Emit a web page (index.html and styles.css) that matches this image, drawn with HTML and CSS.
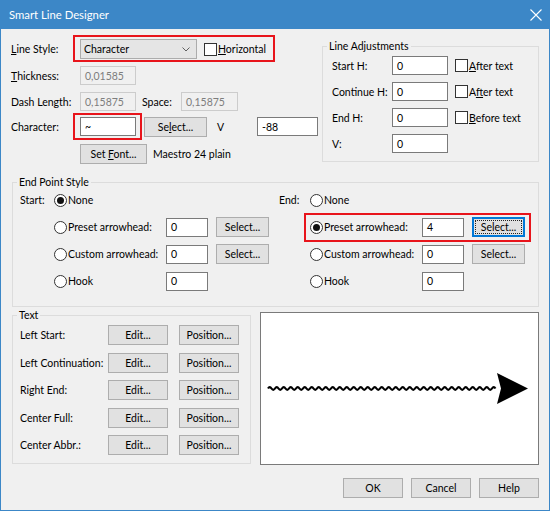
FILE: index.html
```html
<!DOCTYPE html>
<html>
<head>
<meta charset="utf-8">
<title>Smart Line Designer</title>
<link rel="stylesheet" href="styles.css">
</head>
<body>
<div class="window">
  <div class="titlebar">
    <span class="title">Smart Line Designer</span>
    <svg class="close" width="12" height="12" viewBox="0 0 12 12"><path d="M0.5 0.5L11.5 11.5M11.5 0.5L0.5 11.5" stroke="#fff" stroke-width="1.1" fill="none"/></svg>
  </div>
  <div class="content">
    <div class="top">
      <div class="left">
        <div class="row r1">
          <span class="lbl w62"><u>L</u>ine Style:</span>
          <div class="hl hl-style">
            <div class="combo"><span>Character</span><svg width="8" height="5" viewBox="0 0 8 5"><path d="M0.5 0.5L4 4L7.5 0.5" stroke="#606060" stroke-width="1" fill="none"/></svg></div>
            <span class="check"></span><span class="cklbl"><u>H</u>orizontal</span>
          </div>
        </div>
        <div class="row r2">
          <span class="lbl w69"><u>T</u>hickness:</span>
          <span class="field dis w56">0,01585</span>
        </div>
        <div class="row r3">
          <span class="lbl w69">Dash Length:</span>
          <span class="field dis w56">0,15875</span>
          <span class="lbl space">Space:</span>
          <span class="field dis w57">0,15875</span>
        </div>
        <div class="row r4">
          <span class="lbl w62">Character:</span>
          <div class="hl hl-char"><span class="field w56">~</span></div>
          <button class="btn sel">Se<u>l</u>ect...</button>
          <span class="lbl v">V</span>
          <span class="field w61">-88</span>
        </div>
        <div class="row r5">
          <button class="btn font">Set <u>F</u>ont...</button>
          <span class="lbl fontname">Maestro 24 plain</span>
        </div>
      </div>
      <fieldset class="group adj">
        <legend>Line Adjustments</legend>
        <div class="arow"><span class="lbl w60">Start H:</span><span class="field w56">0</span><span class="check"></span><span class="cklbl"><u>A</u>fter text</span></div>
        <div class="arow"><span class="lbl w60">Continue H:</span><span class="field w56">0</span><span class="check"></span><span class="cklbl">A<u>f</u>ter text</span></div>
        <div class="arow"><span class="lbl w60">End H:</span><span class="field w56">0</span><span class="check"></span><span class="cklbl"><u>B</u>efore text</span></div>
        <div class="arow"><span class="lbl w60">V:</span><span class="field w56">0</span></div>
      </fieldset>
    </div>

    <fieldset class="group eps">
      <legend>End Point Style</legend>
      <div class="eps-body">
        <div class="side side-start">
          <span class="lbl">Start:</span>
          <span class="opt"><span class="radio on"></span><span class="rlbl">None</span></span>
          <span></span><span></span>
          <span></span>
          <span class="opt"><span class="radio"></span><span class="rlbl">Preset arrowhead:</span></span>
          <span class="field w42">0</span>
          <button class="btn w53">Select...</button>
          <span></span>
          <span class="opt"><span class="radio"></span><span class="rlbl">Custom arrowhead:</span></span>
          <span class="field w42">0</span>
          <button class="btn w53">Select...</button>
          <span></span>
          <span class="opt"><span class="radio"></span><span class="rlbl">Hook</span></span>
          <span class="field w42">0</span>
          <span></span>
        </div>
        <div class="side side-end">
          <span class="lbl">End:</span>
          <span class="opt"><span class="radio"></span><span class="rlbl">None</span></span>
          <span></span><span></span>
          <span></span>
          <div class="hl hl-preset">
            <span class="opt"><span class="radio on"></span><span class="rlbl">Preset arrowhead:</span></span>
            <span class="field w42">4</span>
            <button class="btn w53 focus"><span class="dots">Select...</span></button>
          </div>
          <span></span>
          <span class="opt"><span class="radio"></span><span class="rlbl">Custom arrowhead:</span></span>
          <span class="field w42">0</span>
          <button class="btn w53">Select...</button>
          <span></span>
          <span class="opt"><span class="radio"></span><span class="rlbl">Hook</span></span>
          <span class="field w42">0</span>
          <span></span>
        </div>
      </div>
    </fieldset>

    <div class="bottom">
      <fieldset class="group text">
        <legend>Text</legend>
        <div class="tgrid">
          <span class="lbl">Left Start:</span><button class="btn">Edit...</button><button class="btn">Position...</button>
          <span class="lbl">Left Continuation:</span><button class="btn">Edit...</button><button class="btn">Position...</button>
          <span class="lbl">Right End:</span><button class="btn">Edit...</button><button class="btn">Position...</button>
          <span class="lbl">Center Full:</span><button class="btn">Edit...</button><button class="btn">Position...</button>
          <span class="lbl">Center Abbr.:</span><button class="btn">Edit...</button><button class="btn">Position...</button>
        </div>
      </fieldset>
      <div class="preview">
        <svg width="277" height="151" viewBox="0 0 277 151">
          <path d="M7 75.5 q1.75 -2.6 3.5 0 t3.5 0 t3.5 0 t3.5 0 t3.5 0 t3.5 0 t3.5 0 t3.5 0 t3.5 0 t3.5 0 t3.5 0 t3.5 0 t3.5 0 t3.5 0 t3.5 0 t3.5 0 t3.5 0 t3.5 0 t3.5 0 t3.5 0 t3.5 0 t3.5 0 t3.5 0 t3.5 0 t3.5 0 t3.5 0 t3.5 0 t3.5 0 t3.5 0 t3.5 0 t3.5 0 t3.5 0 t3.5 0 t3.5 0 t3.5 0 t3.5 0 t3.5 0 t3.5 0 t3.5 0 t3.5 0 t3.5 0 t3.5 0 t3.5 0 t3.5 0 t3.5 0 t3.5 0 t3.5 0 t3.5 0 t3.5 0 t3.5 0 t3.5 0 t3.5 0 t3.5 0 t3.5 0 t3.5 0 t3.5 0 t3.5 0 t3.5 0 t3.5 0 t3.5 0 t3.5 0 t3.5 0 t3.5 0 t3.5 0 t3.5 0" stroke="#000" stroke-width="2.2" fill="none"/>
          <polygon points="236,60 267,75.5 236,91 240,75.5" fill="#000"/>
        </svg>
      </div>
    </div>

    <div class="buttons">
      <button class="btn w60">OK</button>
      <button class="btn w60">Cancel</button>
      <button class="btn w60">Help</button>
    </div>
  </div>
</div>
</body>
</html>
```

FILE: styles.css
```css
* { box-sizing: border-box; }
html, body { margin: 0; padding: 0; }
body {
  font-family: Lato, "Segoe UI", "Noto Sans", sans-serif;
  font-size: 10.5px;
  color: #000;
  background: #f0f0f0;
}
.window {
  width: 550px;
  height: 511px;
  background: #f0f0f0;
  border: 1px solid #3c87c7;
  border-top: 0;
  display: flex;
  flex-direction: column;
  overflow: hidden;
}
.titlebar {
  height: 29px;
  flex-shrink: 0;
  background: #3c87c7;
  color: #fff;
  display: flex;
  align-items: center;
  justify-content: space-between;
  padding: 0 7px 0 8px;
  font-size: 11.3px;
}
.content { padding: 6px 10px 0 10px; }

.top { display: flex; height: 129px; }
.left { width: 311px; display: flex; flex-direction: column; }
.row { display: flex; align-items: center; }
.r1 { height: 27px; }
.r2 { height: 19px; margin-top: 4px; }
.r3 { height: 19px; margin-top: 7px; }
.r4 { height: 27px; margin-top: 2px; }
.r5 { height: 20px; margin-top: 4px; padding-left: 69px; }

.lbl { white-space: nowrap; }
.w60 { width: 60px; }
.w62 { width: 62px; }
.w69 { width: 69px; }
.space { width: 39px; margin-left: 6px; }
.v { width: 40px; margin-left: 10px; }
.fontname { margin-left: 6px; }

.hl { border: 2px solid #e8141b; display: flex; align-items: center; }
.hl-style { width: 202px; height: 27px; padding: 1px 0 0 5px; }
.hl-char { width: 69px; height: 27px; padding-left: 5px; }

.combo {
  width: 117px;
  height: 20px;
  border: 1px solid #acacac;
  background: #e5e5e5;
  display: flex;
  align-items: center;
  justify-content: space-between;
  padding: 0 6px 0 3px;
}
.check {
  width: 13px;
  height: 13px;
  flex-shrink: 0;
  border: 1px solid #333;
  background: #fff;
  margin-left: 7px;
}
.cklbl { margin-left: 1px; white-space: nowrap; }

.field {
  display: flex;
  align-items: center;
  height: 19px;
  border: 1px solid #7a7a7a;
  background: #fff;
  padding: 0 0 0 4px;
  color: #000;
  white-space: nowrap;
}
.field.dis { border-color: #cccccc; background: #f0f0f0; color: #7d7d7d; }
.w42 { width: 42px; }
.w53 { width: 53px; }
.w56 { width: 56px; }
.w57 { width: 57px; }
.w61 { width: 61px; }

.btn {
  height: 20px;
  border: 1px solid #adadad;
  background: #e1e1e1;
  font: inherit;
  color: #000;
  padding: 0;
  margin: 0;
  white-space: nowrap;
}
.sel { width: 63px; margin-left: 2px; }
.font { width: 67px; }
.btn.focus {
  border-color: #0078d7;
  box-shadow: inset 0 0 0 1px #0078d7;
  padding: 2px;
}
.dots {
  display: flex;
  align-items: center;
  justify-content: center;
  height: 100%;
  border: 1px dotted #222;
}

.group {
  border: 1px solid #dcdcdc;
  min-width: 0;
}
.group legend {
  padding: 0 2px;
  line-height: 16px;
}

.group.adj { width: 217px; margin: 3px 0 0 0; padding: 2px 9px 8px 9px; align-self: flex-start; }
.adj legend { margin-left: -5px; }
.arow { display: flex; align-items: center; height: 19px; }
.arow + .arow { margin-top: 7px; }

.group.eps { width: 527px; margin: 10px 0 0 1px; padding: 0 7px 15px 7px; }
.eps legend { margin-left: -3px; }
.eps-body { display: flex; gap: 10px; }
.side {
  display: grid;
  grid-template-rows: repeat(4, 20px);
  row-gap: 7px;
  align-items: center;
}
.side-start { grid-template-columns: 34px 112px 50px 53px; }
.side-end { grid-template-columns: 31px 112px 50px 53px; }
.opt { display: flex; align-items: center; white-space: nowrap; }
.radio {
  width: 13px;
  height: 13px;
  border: 1px solid #333;
  border-radius: 50%;
  background: #fff;
  flex-shrink: 0;
  display: flex;
  align-items: center;
  justify-content: center;
}
.radio.on::after {
  content: "";
  width: 7px;
  height: 7px;
  border-radius: 50%;
  background: #111;
}
.rlbl { margin-left: 1px; }
.hl-preset {
  grid-column: 2 / 5;
  display: grid;
  grid-template-columns: 112px 50px 53px;
  align-items: center;
  margin: -4px -6px -5px -6px;
  padding: 2px 4px 3px 4px;
}

.bottom { display: flex; align-items: flex-start; }
.group.text { width: 239px; margin: 0 0 0 1px; padding: 2px 7px 8px 7px; }
.text legend { margin-left: -3px; }
.tgrid {
  display: grid;
  grid-template-columns: 88px 60px 60px;
  grid-auto-rows: 20px;
  column-gap: 0;
  row-gap: 7.5px;
  align-items: center;
}
.tgrid .btn:nth-child(3n) { margin-left: 11px; width: 60px; }
.tgrid .btn:nth-child(3n+2) { width: 60px; }
.preview {
  width: 279px;
  height: 153px;
  margin: 5px 0 0 9px;
  border: 1px solid #7a7a7a;
  background: #fff;
}
.preview svg { display: block; }

.buttons {
  display: flex;
  justify-content: flex-end;
  gap: 8px;
  margin-top: 13px;
}
```
